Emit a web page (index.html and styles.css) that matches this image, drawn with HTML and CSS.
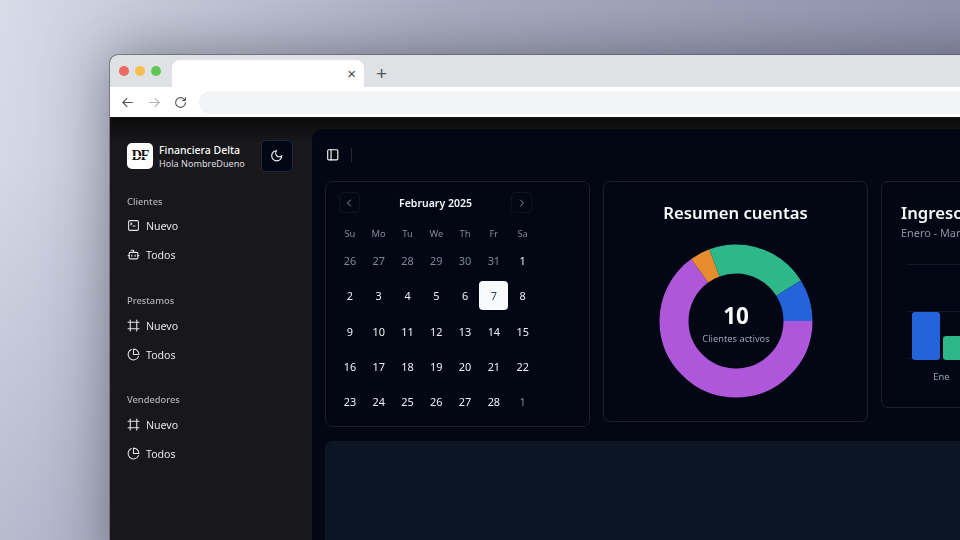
FILE: index.html
```html
<!DOCTYPE html>
<html lang="es">
<head>
<meta charset="utf-8">
<title>Financiera Delta</title>
<link rel="stylesheet" href="styles.css">
</head>
<body>
<svg class="defs" width="0" height="0" aria-hidden="true">
  <symbol id="i-terminal" viewBox="0 0 24 24"><path d="m7 11 2-2-2-2"/><path d="M11 13h4"/><rect width="18" height="18" x="3" y="3" rx="2" ry="2"/></symbol>
  <symbol id="i-bot" viewBox="0 0 24 24"><path d="M12 8V4H8"/><rect width="16" height="12" x="4" y="8" rx="2"/><path d="M2 14h2"/><path d="M20 14h2"/><path d="M15 13v2"/><path d="M9 13v2"/></symbol>
  <symbol id="i-frame" viewBox="0 0 24 24"><path d="M22 6H2"/><path d="M22 18H2"/><path d="M6 2v20"/><path d="M18 2v20"/></symbol>
  <symbol id="i-pie" viewBox="0 0 24 24"><path d="M21.21 15.89A10 10 0 1 1 8 2.83"/><path d="M22 12A10 10 0 0 0 12 2v10z"/></symbol>
  <symbol id="i-moon" viewBox="0 0 24 24"><path d="M12 3a6 6 0 0 0 9 9 9 9 0 1 1-9-9Z"/></symbol>
  <symbol id="i-panel" viewBox="0 0 24 24"><rect width="18" height="18" x="3" y="3" rx="2"/><path d="M9 3v18"/></symbol>
  <symbol id="i-left" viewBox="0 0 24 24"><path d="m15 18-6-6 6-6"/></symbol>
  <symbol id="i-right" viewBox="0 0 24 24"><path d="m9 18 6-6-6-6"/></symbol>
  <symbol id="i-back" viewBox="0 0 24 24"><path d="M21 12H3.5"/><path d="m11 4.5-7.5 7.5 7.5 7.5"/></symbol>
  <symbol id="i-fwd" viewBox="0 0 24 24"><path d="M3 12h17.5"/><path d="m13 4.5 7.5 7.5-7.5 7.5"/></symbol>
  <symbol id="i-reload" viewBox="0 0 24 24"><path d="M21 12a9 9 0 1 1-9-9c2.52 0 4.93 1 6.74 2.74L21 8"/><path d="M21 3v5h-5"/></symbol>
</svg>

<div class="window">
  <div class="tabbar">
    <div class="lights"><span class="light red"></span><span class="light yellow"></span><span class="light green"></span></div>
    <div class="tab"><span class="tab-close">×</span></div>
    <span class="tab-new">+</span>
  </div>
  <div class="toolbar">
    <svg class="nav-icon"><use href="#i-back"/></svg>
    <svg class="nav-icon off"><use href="#i-fwd"/></svg>
    <svg class="nav-icon"><use href="#i-reload"/></svg>
    <div class="omnibox"></div>
  </div>
  <div class="app">
    <aside class="sidebar">
      <div class="brand">
        <div class="logo">DF</div>
        <div class="brand-text">
          <div class="brand-name">Financiera Delta</div>
          <div class="brand-user">Hola NombreDueno</div>
        </div>
        <button class="theme-btn"><svg class="icon-14"><use href="#i-moon"/></svg></button>
      </div>
      <nav class="nav">
        <div class="nav-group">
          <div class="nav-label">Clientes</div>
          <div class="nav-item"><svg class="icon-13"><use href="#i-terminal"/></svg>Nuevo</div>
          <div class="nav-item"><svg class="icon-13"><use href="#i-bot"/></svg>Todos</div>
        </div>
        <div class="nav-group">
          <div class="nav-label">Prestamos</div>
          <div class="nav-item"><svg class="icon-13"><use href="#i-frame"/></svg>Nuevo</div>
          <div class="nav-item"><svg class="icon-13"><use href="#i-pie"/></svg>Todos</div>
        </div>
        <div class="nav-group">
          <div class="nav-label">Vendedores</div>
          <div class="nav-item"><svg class="icon-13"><use href="#i-frame"/></svg>Nuevo</div>
          <div class="nav-item"><svg class="icon-13"><use href="#i-pie"/></svg>Todos</div>
        </div>
      </nav>
    </aside>
    <main class="main">
      <header class="main-head">
        <svg class="icon-14"><use href="#i-panel"/></svg>
        <span class="head-sep"></span>
      </header>
      <section class="cards">
        <div class="card calendar">
          <div class="cal-head">
            <span class="cal-nav"><svg class="icon-10"><use href="#i-left"/></svg></span>
            <span class="cal-title">February 2025</span>
            <span class="cal-nav"><svg class="icon-10"><use href="#i-right"/></svg></span>
          </div>
          <div class="cal-week">
            <span>Su</span><span>Mo</span><span>Tu</span><span>We</span><span>Th</span><span>Fr</span><span>Sa</span>
          </div>
          <div class="cal-grid">
            <span class="muted">26</span><span class="muted">27</span><span class="muted">28</span><span class="muted">29</span><span class="muted">30</span><span class="muted">31</span><span>1</span>
            <span>2</span><span>3</span><span>4</span><span>5</span><span>6</span><span class="selected">7</span><span>8</span>
            <span>9</span><span>10</span><span>11</span><span>12</span><span>13</span><span>14</span><span>15</span>
            <span>16</span><span>17</span><span>18</span><span>19</span><span>20</span><span>21</span><span>22</span>
            <span>23</span><span>24</span><span>25</span><span>26</span><span>27</span><span>28</span><span class="muted">1</span>
          </div>
        </div>
        <div class="card donut-card">
          <h2 class="card-title">Resumen cuentas</h2>
          <div class="donut">
            <svg class="donut-svg" viewBox="0 0 154 154">
              <circle class="seg seg-purple" cx="77" cy="77" r="62" pathLength="360" stroke-dasharray="234.1 360"/>
              <circle class="seg seg-orange" cx="77" cy="77" r="62" pathLength="360" stroke-dasharray="15.5 360" stroke-dashoffset="-234.1"/>
              <circle class="seg seg-green" cx="77" cy="77" r="62" pathLength="360" stroke-dasharray="78.4 360" stroke-dashoffset="-249.6"/>
              <circle class="seg seg-blue" cx="77" cy="77" r="62" pathLength="360" stroke-dasharray="32 360" stroke-dashoffset="-328"/>
            </svg>
            <div class="donut-center">
              <div class="donut-value">10</div>
              <div class="donut-label">Clientes activos</div>
            </div>
          </div>
        </div>
        <div class="card income">
          <h2 class="card-title">Ingresos</h2>
          <div class="income-sub">Enero - Marzo</div>
          <div class="chart">
            <div class="chart-line"></div>
            <div class="chart-line"></div>
            <div class="bars">
              <span class="bar bar-blue"></span>
              <span class="bar bar-green"></span>
            </div>
          </div>
          <div class="chart-x">Ene</div>
        </div>
      </section>
      <section class="wide-panel"></section>
    </main>
  </div>
</div>
</body>
</html>
```
FILE: styles.css
```css
* { box-sizing: border-box; }
html, body { margin: 0; height: 100%; }
body {
  width: 960px;
  height: 540px;
  overflow: hidden;
  padding: 55px 0 0 110px;
  font-family: "Noto Sans", "Open Sans", sans-serif;
  background:
    linear-gradient(180deg, rgba(90, 90, 130, 0) 30%, rgba(90, 90, 130, .18) 100%),
    linear-gradient(100deg, #d8dbe8 0%, #c8ccdc 13%, #abaec2 42%, #8d8fab 100%);
}
.defs { position: absolute; }
svg { fill: none; stroke: currentColor; stroke-width: 2; stroke-linecap: round; stroke-linejoin: round; flex: none; }

.window {
  width: 900px;
  height: 520px;
  border-radius: 8px 0 0 0;
  overflow: hidden;
  display: flex;
  flex-direction: column;
  box-shadow: 0 0 0 1px rgba(80, 80, 90, .55), 0 0 60px rgba(40, 40, 50, .5);
  background: #18181b;
  filter: blur(.3px);
}
.tabbar {
  height: 32px;
  background: #dfe1e4;
  display: flex;
  align-items: flex-end;
  padding-left: 9px;
  flex: none;
}
.lights { display: flex; gap: 6px; align-self: flex-start; margin-top: 11px; width: 53px; }
.light { width: 10px; height: 10px; border-radius: 50%; }
.red { background: #ed6a5e; }
.yellow { background: #f4bf4f; }
.green { background: #61c554; }
.tab {
  width: 192px;
  height: 27px;
  background: #fff;
  border-radius: 8px 8px 0 0;
  display: flex;
  justify-content: flex-end;
  align-items: center;
  padding-right: 8px;
}
.tab-close { font: 15px/1 "Liberation Sans", sans-serif; color: #45484d; }
.tab-new { font: 19px/1 "Liberation Sans", sans-serif; color: #54575c; margin: 0 0 4px 12px; }
.toolbar {
  height: 30px;
  background: #fff;
  display: flex;
  align-items: center;
  gap: 13.5px;
  padding-left: 11px;
  flex: none;
}
.nav-icon { width: 13px; height: 13px; color: #54575c; }
.nav-icon.off { color: #b4b6ba; }
.omnibox { flex: 1; height: 23px; margin: 1px 0 0 -2px; background: #f1f3f4; border-radius: 12px 0 0 12px; }

.app {
  flex: 1;
  display: flex;
  min-height: 0;
  margin-top: 1px;
  background: linear-gradient(180deg, #0b0b0c 0, #18181b 24px);
}
.sidebar { width: 202px; flex: none; padding: 22px 19px 0 17px; color: #fafafa; }
.brand { display: flex; align-items: center; gap: 6px; height: 32px; }
.logo {
  position: relative;
  width: 26px;
  height: 26px;
  border-radius: 5px;
  background: #fff;
  color: #111;
  font: 700 14px/26px "Liberation Serif", serif;
  letter-spacing: -1px;
  text-align: center;
  flex: none;
}
.logo::after {
  content: "";
  position: absolute;
  left: 4px;
  right: 4px;
  top: 12.5px;
  height: 1px;
  background: #fff;
}
.brand-text { flex: 1; min-width: 0; white-space: nowrap; }
.brand-name { font-size: 10.5px; font-weight: 500; line-height: 14px; }
.brand-user { font-size: 9.1px; line-height: 13px; color: #dcdce0; }
.theme-btn {
  width: 32px;
  height: 32px;
  padding: 0;
  border: 1px solid #1e293b;
  border-radius: 5px;
  background: #020713;
  color: #f5f6f8;
  display: flex;
  align-items: center;
  justify-content: center;
  flex: none;
}
.icon-14 { width: 13.5px; height: 13.5px; }
.icon-13 { width: 13px; height: 13px; }
.icon-10 { width: 12px; height: 12px; }

.nav { margin-top: 23px; display: flex; flex-direction: column; gap: 24px; }
.nav-group:first-child { margin-bottom: 1px; }
.nav-group:first-child .nav-label { margin-bottom: 2px; }
.nav-label { font-size: 9.3px; line-height: 14px; font-weight: 500; color: #b0b0b6; margin-bottom: 3px; }
.nav-item {
  height: 29px;
  display: flex;
  align-items: center;
  gap: 6px;
  font-size: 10.6px;
  color: #e4e4e7;
}

.main {
  flex: 1;
  margin: 11px 0 0;
  border-radius: 10px 0 0 0;
  background: #020713;
  padding: 0 0 0 13px;
  color: #f8fafc;
  min-width: 0;
}
.main-head { height: 52px; display: flex; align-items: center; gap: 11px; padding-left: 1px; }
.head-sep { width: 1px; height: 14px; background: #1e293b; }
.cards { display: flex; gap: 13px; align-items: flex-start; }
.card {
  border: 1px solid #182130;
  border-radius: 7px;
  background: #020713;
  flex: none;
}
.calendar { width: 265px; height: 246px; padding: 10px 13px 0 9.5px; }
.cal-head { width: 194px; height: 21px; display: flex; align-items: center; justify-content: space-between; margin-left: 3px; }
.cal-nav {
  width: 21px;
  height: 21px;
  border: 1px solid #0c1422;
  border-radius: 4px;
  display: flex;
  align-items: center;
  justify-content: center;
  color: #8d95a3;
}
.cal-title { font-size: 10.5px; font-weight: 600; color: #f4f6f9; }
.cal-week, .cal-grid { display: grid; grid-template-columns: repeat(7, 28.8px); text-align: center; }
.cal-week { margin-top: 10px; height: 20px; align-items: center; font-size: 9.4px; color: #7f8999; }
.cal-grid { margin-top: 0; grid-auto-rows: 35.3px; align-items: center; justify-items: center; font-size: 10.9px; color: #eef1f5; }
.cal-grid span { width: 28.8px; height: 29px; line-height: 29px; border-radius: 4px; }
.cal-grid .muted { color: #7f8999; }
.cal-grid .selected { background: #f8fafc; color: #334155; }

.donut-card { width: 265px; height: 241px; padding-top: 19px; text-align: center; }
.card-title { margin: 0; font-size: 16.7px; font-weight: 600; line-height: 24px; color: #f8fafc; }
.donut { position: relative; width: 154px; height: 154px; margin: 18.5px auto 0; left: .5px; }
.donut-svg { display: block; width: 154px; height: 154px; }
.seg { stroke-width: 29; stroke-linecap: butt; }
.seg-purple { stroke: #af57db; }
.seg-orange { stroke: #e88c30; }
.seg-green { stroke: #2eb88a; }
.seg-blue { stroke: #2563db; }
.donut-center { position: absolute; inset: 0; display: flex; flex-direction: column; align-items: center; justify-content: center; }
.donut-value { font-size: 22.5px; font-weight: 700; line-height: 30px; margin-top: 4px; }
.donut-label { font-size: 9.3px; line-height: 13px; margin-top: 1px; color: #94a3b8; }

.income { width: 300px; height: 227px; padding: 19px 0 0 19px; text-align: left; }
.income-sub { font-size: 10.9px; line-height: 15px; color: #8a93a3; white-space: nowrap; }
.chart { position: relative; width: 280px; height: 96px; margin: 24px 0 0 6px; border-top: 1px solid #101a2a; }
.chart-line { height: 47px; border-bottom: 1px solid #101a2a; }
.bars { position: absolute; left: 5px; bottom: 0; display: flex; align-items: flex-end; gap: 3px; }
.bar { width: 28px; border-radius: 3px; }
.bar-blue { height: 48px; background: #2563db; }
.bar-green { height: 24px; background: #2eb88a; }
.chart-x { width: 81px; text-align: center; font-size: 9.4px; line-height: 13px; margin-top: 10px; color: #94a3b8; }

.wide-panel { margin-top: 14px; height: 200px; border-radius: 7px 0 0 0; background: #0c1524; }
```
